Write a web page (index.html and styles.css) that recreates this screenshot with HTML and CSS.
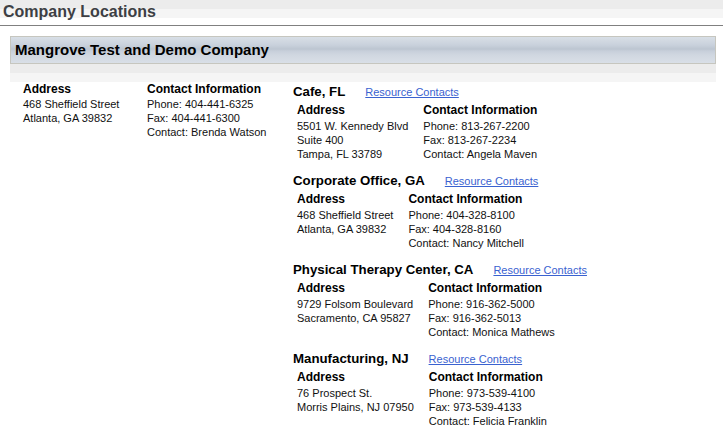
FILE: index.html
```html
<!DOCTYPE html>
<html lang="en">
<head>
<meta charset="utf-8">
<title>Company Locations</title>
<link rel="stylesheet" href="styles.css">
</head>
<body>
<header class="page-title">Company Locations</header>
<section class="company">
  <div class="company-head">Mangrove Test and Demo Company</div>
  <div class="company-band"></div>
  <div class="company-body">
    <div class="main-info">
      <div class="main-col main-addr">
        <div class="main-label">Address</div>
        <div class="line">468 Sheffield Street</div>
        <div class="line">Atlanta, GA 39832</div>
      </div>
      <div class="main-col main-contact">
        <div class="main-label">Contact Information</div>
        <div class="line">Phone: 404-441-6325</div>
        <div class="line">Fax: 404-441-6300</div>
        <div class="line">Contact: Brenda Watson</div>
      </div>
    </div>
    <div class="locations">
      <div class="location">
        <div class="loc-head"><span class="loc-name">Cafe, FL</span><a class="loc-link" href="#">Resource Contacts</a></div>
        <div class="loc-grid">
          <div>
            <div class="loc-label">Address</div>
            <div class="line">5501 W. Kennedy Blvd</div>
            <div class="line">Suite 400</div>
            <div class="line">Tampa, FL 33789</div>
          </div>
          <div>
            <div class="loc-label">Contact Information</div>
            <div class="line">Phone: 813-267-2200</div>
            <div class="line">Fax: 813-267-2234</div>
            <div class="line">Contact: Angela Maven</div>
          </div>
        </div>
      </div>
      <div class="location">
        <div class="loc-head"><span class="loc-name">Corporate Office, GA</span><a class="loc-link" href="#">Resource Contacts</a></div>
        <div class="loc-grid">
          <div>
            <div class="loc-label">Address</div>
            <div class="line">468 Sheffield Street</div>
            <div class="line">Atlanta, GA 39832</div>
          </div>
          <div>
            <div class="loc-label">Contact Information</div>
            <div class="line">Phone: 404-328-8100</div>
            <div class="line">Fax: 404-328-8160</div>
            <div class="line">Contact: Nancy Mitchell</div>
          </div>
        </div>
      </div>
      <div class="location">
        <div class="loc-head"><span class="loc-name">Physical Therapy Center, CA</span><a class="loc-link" href="#">Resource Contacts</a></div>
        <div class="loc-grid">
          <div>
            <div class="loc-label">Address</div>
            <div class="line">9729 Folsom Boulevard</div>
            <div class="line">Sacramento, CA 95827</div>
          </div>
          <div>
            <div class="loc-label">Contact Information</div>
            <div class="line">Phone: 916-362-5000</div>
            <div class="line">Fax: 916-362-5013</div>
            <div class="line">Contact: Monica Mathews</div>
          </div>
        </div>
      </div>
      <div class="location">
        <div class="loc-head"><span class="loc-name">Manufacturing, NJ</span><a class="loc-link" href="#">Resource Contacts</a></div>
        <div class="loc-grid">
          <div>
            <div class="loc-label">Address</div>
            <div class="line">76 Prospect St.</div>
            <div class="line">Morris Plains, NJ 07950</div>
          </div>
          <div>
            <div class="loc-label">Contact Information</div>
            <div class="line">Phone: 973-539-4100</div>
            <div class="line">Fax: 973-539-4133</div>
            <div class="line">Contact: Felicia Franklin</div>
          </div>
        </div>
      </div>
    </div>
  </div>
</section>
</body>
</html>
```
FILE: styles.css
```css
* { box-sizing: border-box; }
html, body { margin: 0; padding: 0; background: #fff; }
body {
  font-family: "Liberation Sans", Arial, sans-serif;
  color: #111;
  font-size: 11px;
}
.page-title {
  height: 26px;
  padding-left: 3px;
  font-size: 16px;
  font-weight: bold;
  line-height: 23px;
  color: #3d3f44;
  background: linear-gradient(to bottom, #ececec 0, #ececec 9px, #f5f5f5 9px, #f5f5f5 18px, #fff 18px);
  border-bottom: 1px solid #808080;
}
.company {
  margin: 10px 7px 0 10px;
}
.company-head {
  height: 28px;
  border: 1px solid #c6c6bf;
  padding-left: 4px;
  font-size: 15px;
  font-weight: bold;
  line-height: 26px;
  color: #000;
  background: linear-gradient(to bottom, #d8dfe7 0, #d1d8e1 4px, #c9d1dc 8px, #c0c9d4 11px, #bcc5d1 12px, #c7cfda 14px, #d0d7e0 18px, #d9dfe7 26px);
}
.company-band {
  height: 18px;
  background: linear-gradient(to bottom, #ececec 0, #ececec 9px, #f5f5f5 9px, #f5f5f5 18px);
}
.company-body {
  display: flex;
  padding-left: 13px;
}
.main-info { display: flex; }
.main-addr { width: 124px; }
.main-contact { width: 146px; }
.main-label {
  font-size: 12px;
  font-weight: bold;
  line-height: 15px;
  color: #000;
}
.line {
  font-size: 11px;
  line-height: 14px;
  white-space: nowrap;
}
.location { margin-bottom: 10px; }
.loc-head {
  display: flex;
  align-items: baseline;
  line-height: 19px;
}
.loc-name {
  font-size: 13.25px;
  font-weight: bold;
  color: #000;
}
.loc-link {
  margin-left: 20px;
  font-size: 11px;
  color: #3a62d0;
  text-decoration: underline;
}
.loc-grid {
  display: grid;
  grid-template-columns: auto auto;
  justify-content: start;
  column-gap: 15px;
  padding-left: 4px;
}
.loc-label {
  font-size: 12px;
  font-weight: bold;
  line-height: 17px;
  color: #000;
}
```
